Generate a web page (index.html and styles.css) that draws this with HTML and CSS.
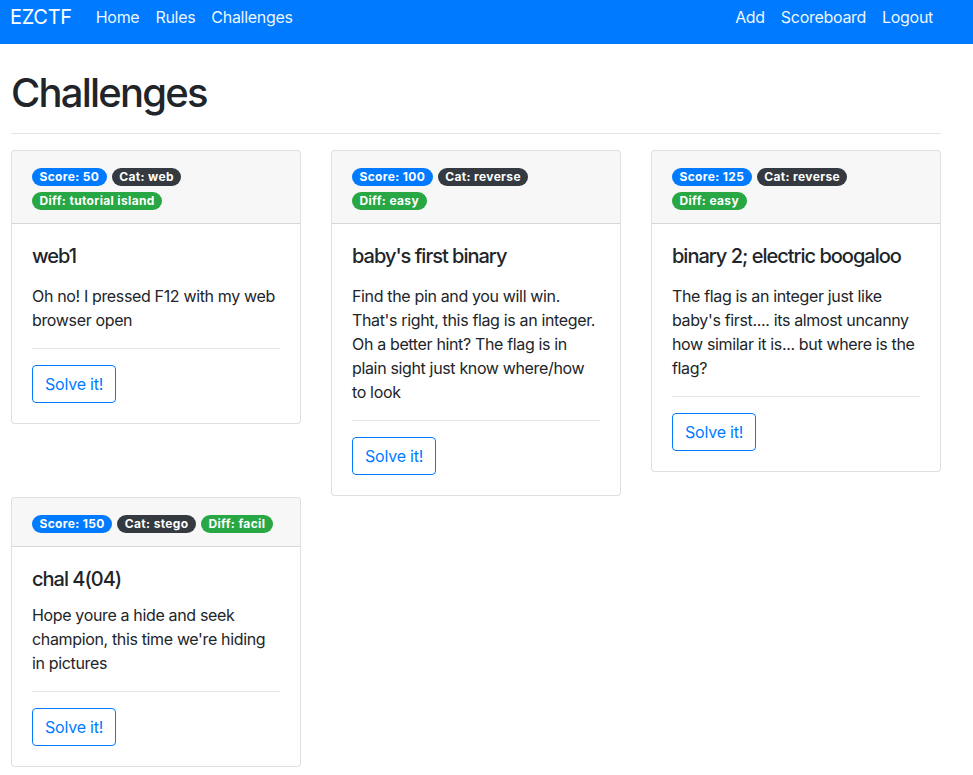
FILE: index.html
```html
<!DOCTYPE html>
<html lang="en">
<head>
<meta charset="utf-8">
<title>EZCTF - Challenges</title>
<link rel="stylesheet" href="styles.css">
</head>
<body>
<nav class="navbar">
  <a class="brand" href="#">EZCTF</a>
  <div class="nav-group">
    <a class="nav-link" href="#">Home</a>
    <a class="nav-link" href="#">Rules</a>
    <a class="nav-link" href="#">Challenges</a>
  </div>
  <div class="nav-group nav-right">
    <a class="nav-link" href="#">Add</a>
    <a class="nav-link" href="#">Scoreboard</a>
    <a class="nav-link" href="#">Logout</a>
  </div>
</nav>
<main class="container">
  <h1 class="page-title">Challenges</h1>
  <hr class="divider">
  <div class="card-grid">
    <div class="card">
      <div class="card-header">
        <span class="badge badge-primary">Score: 50</span>
        <span class="badge badge-dark">Cat: web</span>
        <span class="badge badge-success">Diff: tutorial island</span>
      </div>
      <div class="card-body">
        <h5 class="card-title">web1</h5>
        <p class="card-text">Oh no! I pressed F12 with my web browser open</p>
        <hr class="card-rule">
        <a class="btn" href="#">Solve it!</a>
      </div>
    </div>
    <div class="card">
      <div class="card-header">
        <span class="badge badge-primary">Score: 100</span>
        <span class="badge badge-dark">Cat: reverse</span>
        <span class="badge badge-success">Diff: easy</span>
      </div>
      <div class="card-body">
        <h5 class="card-title">baby's first binary</h5>
        <p class="card-text">Find the pin and you will win. That's right, this flag is an integer. Oh a better hint? The flag is in plain sight just know where/how to look</p>
        <hr class="card-rule">
        <a class="btn" href="#">Solve it!</a>
      </div>
    </div>
    <div class="card">
      <div class="card-header">
        <span class="badge badge-primary">Score: 125</span>
        <span class="badge badge-dark">Cat: reverse</span>
        <span class="badge badge-success">Diff: easy</span>
      </div>
      <div class="card-body">
        <h5 class="card-title">binary 2; electric boogaloo</h5>
        <p class="card-text">The flag is an integer just like baby's first.... its almost uncanny how similar it is... but where is the flag?</p>
        <hr class="card-rule">
        <a class="btn" href="#">Solve it!</a>
      </div>
    </div>
    <div class="card">
      <div class="card-header">
        <span class="badge badge-primary">Score: 150</span>
        <span class="badge badge-dark">Cat: stego</span>
        <span class="badge badge-success">Diff: facil</span>
      </div>
      <div class="card-body">
        <h5 class="card-title card-title-tight">chal 4(04)</h5>
        <p class="card-text">Hope youre a hide and seek champion, this time we're hiding in pictures</p>
        <hr class="card-rule">
        <a class="btn" href="#">Solve it!</a>
      </div>
    </div>
  </div>
</main>
</body>
</html>
```
FILE: styles.css
```css
* { box-sizing: border-box; }
html, body { margin: 0; padding: 0; }
body {
  font-family: Inter, "Noto Sans", "Liberation Sans", sans-serif;
  font-size: 16px;
  line-height: 24px;
  letter-spacing: -0.35px;
  color: #212529;
  background: #fff;
}
a { text-decoration: none; }

.navbar {
  display: flex;
  align-items: flex-start;
  height: 44px;
  background: #007bff;
  padding: 0 32px 0 10px;
}
.brand {
  color: #fff;
  font-size: 20px;
  line-height: 24px;
  letter-spacing: -0.3px;
  padding-top: 5px;
  margin-right: 16px;
}
.nav-group { display: flex; }
.nav-right { margin-left: auto; }
.nav-link {
  color: rgba(255,255,255,0.95);
  font-size: 16px;
  line-height: 24px;
  letter-spacing: -0.3px;
  padding: 5px 8px 0;
}

.container {
  width: 930px;
  margin-left: 11px;
}
.page-title {
  font-size: 40px;
  font-weight: 500;
  line-height: 48px;
  letter-spacing: -0.045em;
  margin: 25px 0 8px;
}
.divider {
  border: 0;
  border-top: 1px solid rgba(0,0,0,0.1);
  margin: 16px 0;
}

.card-grid {
  display: grid;
  grid-template-columns: repeat(3, 290px);
  column-gap: 30px;
  row-gap: 1px;
  align-items: start;
}
.card {
  border: 1px solid rgba(0,0,0,0.125);
  border-radius: 4px;
  background: #fff;
  overflow: hidden;
}
.card-header {
  background: rgba(0,0,0,0.03);
  border-bottom: 1px solid rgba(0,0,0,0.125);
  padding: 17px 20px 13px;
  display: flex;
  flex-wrap: wrap;
  column-gap: 5px;
  row-gap: 6px;
}
.badge {
  display: inline-block;
  font-size: 12px;
  font-weight: 700;
  line-height: 12px;
  letter-spacing: 0.35px;
  padding: 3px 7.5px;
  border-radius: 10rem;
  color: #fff;
  white-space: nowrap;
}
.badge-primary { background: #007bff; }
.badge-dark { background: #343a40; }
.badge-success { background: #28a745; }

.card-body { padding: 20px; }
.card-title {
  font-size: 20px;
  font-weight: 500;
  line-height: 24px;
  letter-spacing: -0.05em;
  margin: 0 0 16px;
}
.card-title-tight { margin-bottom: 12px; }
.card-text { margin: 0; }
.card-rule {
  border: 0;
  border-top: 1px solid rgba(0,0,0,0.1);
  margin: 16px 0;
}
.btn {
  display: inline-block;
  color: #007bff;
  border: 1px solid #007bff;
  border-radius: 4px;
  padding: 6px 12px;
  font-size: 16px;
  line-height: 24px;
  letter-spacing: -0.2px;
}
```
